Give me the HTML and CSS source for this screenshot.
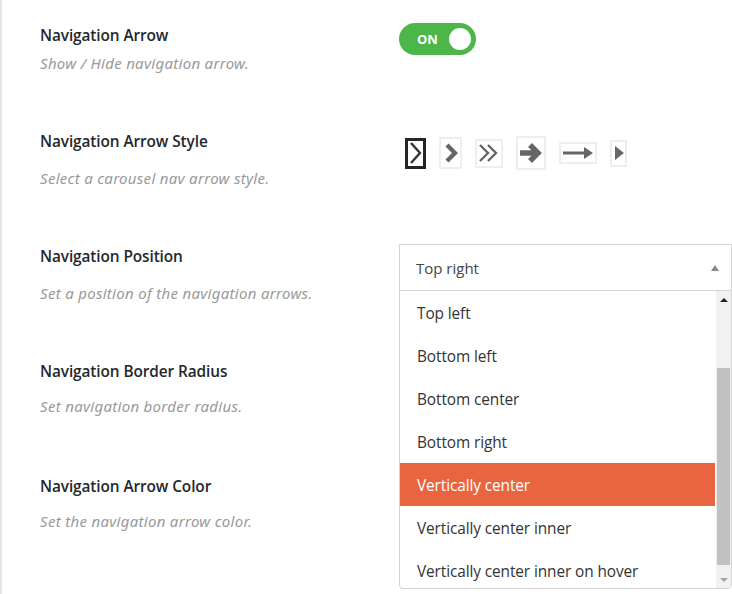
FILE: index.html
```html
<!DOCTYPE html>
<html>
<head>
<meta charset="utf-8">
<link rel="stylesheet" href="styles.css">
</head>
<body>
<div class="page">
  <div class="row row-first">
    <div class="label">
      <div class="title">Navigation Arrow</div>
      <div class="desc desc-first">Show / Hide navigation arrow.</div>
    </div>
    <div class="control">
      <div class="toggle"><span class="toggle-text">ON</span><span class="knob"></span></div>
    </div>
  </div>

  <div class="row">
    <div class="label">
      <div class="title">Navigation Arrow Style</div>
      <div class="desc">Select a carousel nav arrow style.</div>
    </div>
    <div class="control">
      <div class="arrows">
        <div class="arrow-box selected" style="width:21px;height:31px">
          <svg width="14" height="24" viewBox="0 0 14 24"><path d="M2 2 L11 12 L2 22" fill="none" stroke="#333" stroke-width="2.4"/></svg>
        </div>
        <div class="arrow-box" style="width:23px;height:32px">
          <svg width="14" height="22" viewBox="0 0 14 22"><path d="M3 3 L11 11 L3 19" fill="none" stroke="#666" stroke-width="4.4"/></svg>
        </div>
        <div class="arrow-box" style="width:28px;height:29px">
          <svg width="24" height="22" viewBox="0 0 24 22"><path d="M3 3 L11 11 L3 19 M11 3 L19 11 L11 19" fill="none" stroke="#666" stroke-width="2.4"/></svg>
        </div>
        <div class="arrow-box" style="width:30px;height:34px">
          <svg width="26" height="24" viewBox="0 0 26 24"><path d="M2 12 L20 12" stroke="#666" stroke-width="5.5"/><path d="M12 4 L20 12 L12 20" fill="none" stroke="#666" stroke-width="5.5"/></svg>
        </div>
        <div class="arrow-box" style="width:38px;height:22px">
          <svg width="34" height="16" viewBox="0 0 34 16"><path d="M2 8 L28 8" stroke="#666" stroke-width="3"/><path d="M23 2 L32 8 L23 14 Z" fill="#666"/></svg>
        </div>
        <div class="arrow-box" style="width:17px;height:27px">
          <svg width="12" height="18" viewBox="0 0 12 18"><path d="M2 2 L11 9 L2 16 Z" fill="#666"/></svg>
        </div>
      </div>
    </div>
  </div>

  <div class="row">
    <div class="label">
      <div class="title">Navigation Position</div>
      <div class="desc">Set a position of the navigation arrows.</div>
    </div>
    <div class="control">
      <div class="select">
        <div class="select-head">
          <span>Top right</span>
          <span class="caret"></span>
        </div>
        <div class="dropdown">
          <div class="options">
            <div class="option">Top left</div>
            <div class="option">Bottom left</div>
            <div class="option">Bottom center</div>
            <div class="option">Bottom right</div>
            <div class="option active">Vertically center</div>
            <div class="option">Vertically center inner</div>
            <div class="option">Vertically center inner on hover</div>
          </div>
          <div class="scrollbar">
            <div class="sb-btn"><span class="sb-up"></span></div>
            <div class="sb-track"><div class="sb-thumb"></div></div>
            <div class="sb-btn"><span class="sb-down"></span></div>
          </div>
        </div>
      </div>
    </div>
  </div>

  <div class="row row-tight">
    <div class="label">
      <div class="title">Navigation Border Radius</div>
      <div class="desc">Set navigation border radius.</div>
    </div>
    <div class="control"></div>
  </div>

  <div class="row row-tight">
    <div class="label">
      <div class="title">Navigation Arrow Color</div>
      <div class="desc">Set the navigation arrow color.</div>
    </div>
    <div class="control"></div>
  </div>
</div>
</body>
</html>
```

FILE: styles.css
```css
html, body {
  margin: 0;
  padding: 0;
  background: #fff;
}
body {
  font-family: "Open Sans", "Noto Sans", sans-serif;
  width: 732px;
  height: 594px;
  overflow: hidden;
}
.page {
  border-left: 2px solid #e6e6e6;
  padding-left: 38px;
  height: 594px;
  box-sizing: border-box;
}
.row {
  display: flex;
  height: 115px;
  box-sizing: border-box;
}
.row-first {
  height: 131px;
  padding-top: 25px;
}
.label {
  width: 359px;
  flex: none;
}
.title {
  font-size: 15.4px;
  font-weight: 600;
  color: #23282d;
  line-height: 20px;
  letter-spacing: -0.1px;
  padding-top: 1px;
}
.desc {
  font-family: "Noto Sans", "Open Sans", sans-serif;
  font-size: 15px;
  font-style: italic;
  color: #999;
  line-height: 20px;
  margin-top: 16px;
  letter-spacing: 0.3px;
}
.desc-first {
  margin-top: 7px;
}
.row-tight .desc {
  margin-top: 14px;
}
.control {
  flex: 1;
  position: relative;
}
.toggle {
  width: 77px;
  height: 32px;
  margin-top: -2px;
  border-radius: 16px;
  background: #4cb648;
  display: flex;
  align-items: center;
  justify-content: space-between;
  padding: 0 5px 0 18px;
  box-sizing: border-box;
}
.toggle-text {
  color: #fff;
  font-weight: 700;
  font-size: 13px;
  font-family: "Open Sans", sans-serif;
}
.knob {
  width: 22px;
  height: 22px;
  border-radius: 50%;
  background: #fff;
}
.arrows {
  display: flex;
  align-items: center;
  gap: 13px;
  height: 44px;
  margin-left: 6px;
}
.arrow-box {
  box-sizing: border-box;
  border: 2px solid #eeeeee;
  display: flex;
  align-items: center;
  justify-content: center;
}
.arrow-box.selected {
  border: 3px solid #23242c;
}
.select {
  position: relative;
  width: 333px;
  margin-top: -2px;
}
.select-head {
  height: 47px;
  border: 1px solid #d4d4d4;
  box-sizing: border-box;
  display: flex;
  align-items: center;
  justify-content: space-between;
  padding: 1px 12px 0 16px;
  font-size: 15px;
  color: #444;
  background: #fff;
}
.caret {
  width: 0;
  height: 0;
  border-left: 4px solid transparent;
  border-right: 4px solid transparent;
  border-bottom: 6px solid #888;
}
.dropdown {
  position: absolute;
  top: 46px;
  left: 0;
  width: 333px;
  height: 299px;
  border: 1px solid #d4d4d4;
  border-radius: 0 0 4px 4px;
  box-sizing: border-box;
  background: #fff;
  display: flex;
  overflow: hidden;
}
.options {
  flex: 1;
  padding-right: 1px;
}
.option {
  height: 43px;
  line-height: 45px;
  padding-left: 17px;
  font-size: 15.4px;
  color: #333;
  letter-spacing: -0.1px;
  white-space: nowrap;
}
.option.active {
  background: #e96540;
  color: #fff;
}
.scrollbar {
  width: 15px;
  flex: none;
  background: #f1f1f1;
  display: flex;
  flex-direction: column;
}
.sb-btn {
  height: 17px;
  display: flex;
  align-items: center;
  justify-content: center;
}
.sb-up {
  width: 0;
  height: 0;
  border-left: 4px solid transparent;
  border-right: 4px solid transparent;
  border-bottom: 4px solid #222;
}
.sb-down {
  width: 0;
  height: 0;
  border-left: 4px solid transparent;
  border-right: 4px solid transparent;
  border-top: 4px solid #a8a0b0;
}
.sb-track {
  flex: 1;
  padding-top: 60px;
  padding-bottom: 6px;
  display: flex;
  flex-direction: column;
}
.sb-thumb {
  flex: 1;
  margin: 0 1px;
  background: #c1c1c1;
}
```
